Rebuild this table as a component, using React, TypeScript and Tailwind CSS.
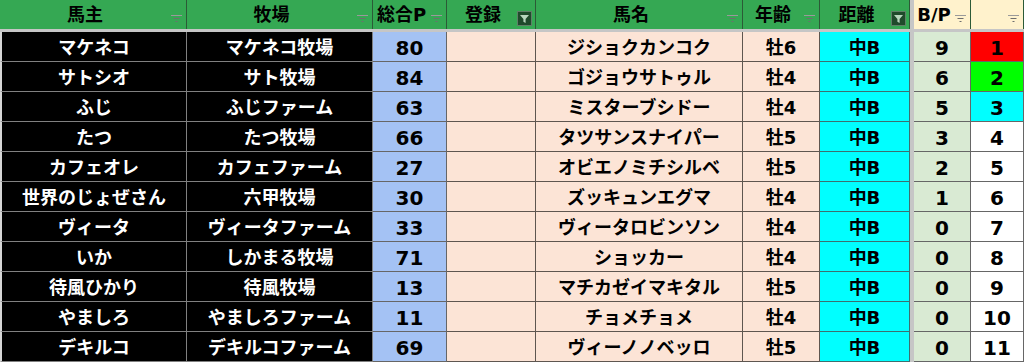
import type { ReactNode } from "react"

const grid =
  "grid grid-cols-[187px_186px_74px_89px_207px_77px_90px_4px_57px_53px]"

type Horse = {
  owner: string
  farm: string
  total: number
  name: string
  age: string
  bp: number
}

const horses: Horse[] = [
  { owner: "マケネコ", farm: "マケネコ牧場", total: 80, name: "ジショクカンコク", age: "牡6", bp: 9 },
  { owner: "サトシオ", farm: "サト牧場", total: 84, name: "ゴジョウサトゥル", age: "牡4", bp: 6 },
  { owner: "ふじ", farm: "ふじファーム", total: 63, name: "ミスターブシドー", age: "牡4", bp: 5 },
  { owner: "たつ", farm: "たつ牧場", total: 66, name: "タツサンスナイパー", age: "牡5", bp: 3 },
  { owner: "カフェオレ", farm: "カフェファーム", total: 27, name: "オビエノミチシルベ", age: "牡5", bp: 2 },
  { owner: "世界のじょぜさん", farm: "六甲牧場", total: 30, name: "ズッキュンエグマ", age: "牡4", bp: 1 },
  { owner: "ヴィータ", farm: "ヴィータファーム", total: 33, name: "ヴィータロビンソン", age: "牡4", bp: 0 },
  { owner: "いか", farm: "しかまる牧場", total: 71, name: "ショッカー", age: "牡4", bp: 0 },
  { owner: "待風ひかり", farm: "待風牧場", total: 13, name: "マチカゼイマキタル", age: "牡5", bp: 0 },
  { owner: "やましろ", farm: "やましろファーム", total: 11, name: "チョメチョメ", age: "牡4", bp: 0 },
  { owner: "デキルコ", farm: "デキルコファーム", total: 69, name: "ヴィーノノベッロ", age: "牡5", bp: 0 },
]

const rankBg = ["bg-[#ff0000]", "bg-[#00ff00]", "bg-[#00ffff]"]

function FilterMark() {
  return (
    <svg width="11" height="7" viewBox="0 0 11 7" className="absolute right-[4px] bottom-[7px]">
      <rect x="0" y="0" width="11" height="1" fill="#9a9a9a" />
      <rect x="2.5" y="3" width="6" height="1" fill="#6e6e6e" />
      <rect x="4.5" y="6" width="2" height="1" fill="#6e6e6e" />
    </svg>
  )
}

function FilterOn() {
  return (
    <svg width="15" height="15" viewBox="0 0 15 15" className="absolute right-[3px] bottom-[3px]">
      <rect x="0.5" y="0.5" width="14" height="14" fill="#1f4a2b" stroke="#5f7f67" />
      <path d="M3 4 H12 L8.6 8 V12 L6.4 10.8 V8 Z" fill="#b7d6bd" />
    </svg>
  )
}

function Head({
  children,
  filter = "off",
  yellow = false,
}: {
  children?: ReactNode
  filter?: "off" | "on"
  yellow?: boolean
}) {
  return (
    <div
      className={`relative flex items-center justify-center pr-[16px] border-r border-[#2c5a37] text-[18px] font-bold text-black ${
        yellow ? "bg-[#fff2cc]" : "bg-[#35a853]"
      }`}
    >
      {children}
      {filter === "on" ? <FilterOn /> : <FilterMark />}
    </div>
  )
}

function Cell({ className, children }: { className: string; children?: ReactNode }) {
  return (
    <div className={`flex items-center justify-center pt-[3px] border-r border-b font-bold ${className}`}>
      {children}
    </div>
  )
}

export default function App() {
  return (
    <div
      className="h-[364px] w-[1024px] overflow-hidden bg-white leading-none"
      style={{ fontFamily: '"DejaVu Sans", "Noto Sans CJK JP", sans-serif' }}
    >
      <div className={`${grid} h-[29px]`}>
        <Head>馬主</Head>
        <Head>牧場</Head>
        <Head>総合P</Head>
        <Head filter="on">登録</Head>
        <Head>馬名</Head>
        <Head>年齢</Head>
        <Head filter="on">距離</Head>
        <div className="bg-[#c6c6c6]" />
        <Head yellow>B/P</Head>
        <Head yellow />
      </div>
      <div className="h-[3px] bg-[#c6c6c6]" />

      {horses.map((h, i) => (
        <div key={h.name} className={`${grid} h-[30px]`}>
          <Cell className="border-l-2 border-l-[#d6d6d6] border-[#808080] bg-black text-[18px] text-white">
            {h.owner}
          </Cell>
          <Cell className="border-[#808080] bg-black text-[18px] text-white">{h.farm}</Cell>
          <Cell className="border-[#666666] bg-[#a4c2f4] text-[20px] text-black">{h.total}</Cell>
          <Cell className="border-[#5e5650] bg-[#fce4d6]" />
          <Cell className="border-[#5e5650] bg-[#fce4d6] text-[18px] text-black">{h.name}</Cell>
          <Cell className="border-[#5e5650] bg-[#fce4d6] text-[18px] text-black">{h.age}</Cell>
          <Cell className="border-[#3d6f6f] bg-[#00ffff] text-[18px] text-black">中B</Cell>
          <div className="bg-[#c6c6c6]" />
          <Cell className="border-[#666666] bg-[#d9ead3] text-[20px] text-black">{h.bp}</Cell>
          <Cell
            className={`border-[#666666] text-[20px] text-black ${rankBg[i] ?? "bg-white"}`}
          >
            {i + 1}
          </Cell>
        </div>
      ))}
    </div>
  )
}
